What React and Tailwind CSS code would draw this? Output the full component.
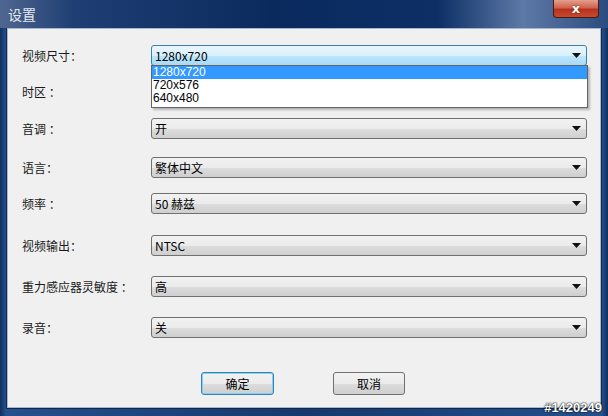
import React from 'react';

const latin = "font-['Liberation_Sans','Noto_Sans_CJK_SC',sans-serif]";
const cjk = "font-['Noto_Sans_CJK_SC','Liberation_Sans',sans-serif]";

const Arrow = () => (
    <svg width="9" height="5" viewBox="0 0 9 5" className="mr-[5px]">
        <path d="M0 0 H9 L4.5 5 Z" fill="#111" />
    </svg>
);

const Combo = ({ value, active }) => (
    <div
        className={
            active
                ? 'flex h-[21px] flex-1 items-center justify-between rounded-[3px] border border-[#3c7fb1] bg-[linear-gradient(#eaf6fd_0%,#d9f0fc_50%,#bee6fd_51%,#a7d9f5_100%)] pl-[3px]'
                : 'flex h-[21px] flex-1 items-center justify-between rounded-[3px] border border-[#707070] bg-[linear-gradient(#f2f2f2_0%,#ebebeb_50%,#dddddd_51%,#cfcfcf_100%)] pl-[3px]'
        }
    >
        <span className={`text-[12px] leading-none text-black ${cjk}`}>{value}</span>
        <Arrow />
    </div>
);

const rows = [
    { label: '视频尺寸：', value: '1280x720', mt: 'mt-[16px]', active: true },
    { label: '时区 ：', value: '', mt: 'mt-[15px]' },
    { label: '音调 ：', value: '开', mt: 'mt-[16px]' },
    { label: '语言：', value: '繁体中文', mt: 'mt-[18px]' },
    { label: '频率 ：', value: '50 赫兹', mt: 'mt-[15px]' },
    { label: '视频输出：', value: 'NTSC', mt: 'mt-[21px]' },
    { label: '重力感应器灵敏度 ：', value: '高', mt: 'mt-[20px]' },
    { label: '录音：', value: '关', mt: 'mt-[20px]' },
];

const options = ['1280x720', '720x576', '640x480'];

export default function App() {
    return (
        <div className="relative flex h-[416px] w-[608px] flex-col overflow-hidden bg-[linear-gradient(90deg,#10305f_0%,#24508c_1%,#16386c_50%,#24508c_99%,#10305f_100%)]">
            {/* Title bar */}
            <div className="relative flex h-[28px] items-center bg-[linear-gradient(90deg,#4f6690_0%,#1f3f74_12%,#0a2a5e_45%,#0d2f66_72%,#5d79a6_86%,#2b4b80_100%)] pl-[8px]">
                <span className={`text-[14px] text-[#e6e9ee] ${cjk}`}>设置</span>
                <div className="absolute right-[9px] top-0 flex h-[18px] w-[46px] items-center justify-center rounded-b-[4px] border border-t-0 border-[#4a1a12] bg-[linear-gradient(#e3a08f_0%,#d0634e_45%,#b8321e_55%,#c44a2e_100%)]">
                    <span className="text-[13px] font-bold leading-none text-white [text-shadow:0_0_2px_#5a1a10] font-['DejaVu_Sans',sans-serif]">x</span>
                </div>
            </div>

            {/* Client area */}
            <div className="mx-[7px] mb-[8px] flex flex-1 border border-[#a9b8cc] bg-[#f0f0f0] shadow-[0_0_0_1px_#0f2850]">
                <div className="relative flex flex-1 flex-col pl-[14px] pr-[13px]">
                    {rows.map((r) => (
                        <div key={r.label} className={`flex items-center ${r.mt}`}>
                            <span className={`w-[129px] text-[12px] text-[#1a1a1a] ${cjk}`}>{r.label}</span>
                            <Combo value={r.value} active={r.active} />
                        </div>
                    ))}

                    {/* Open dropdown list */}
                    <div className={`absolute left-[143px] right-[12px] top-[36px] border border-[#646464] bg-white pb-[2px] shadow-[2px_2px_2px_rgba(0,0,0,0.25)] ${latin}`}>
                        {options.map((o, i) => (
                            <div
                                key={o}
                                className={
                                    i === 0
                                        ? 'h-[13px] bg-[#3399ff] pl-[1px] text-[12px] leading-[13px] text-white'
                                        : 'h-[13px] pl-[1px] text-[12px] leading-[13px] text-black'
                                }
                            >
                                {o}
                            </div>
                        ))}
                    </div>

                    {/* Buttons */}
                    <div className="mt-[34px] flex pl-[179px]">
                        <button className={`h-[23px] w-[73px] rounded-[3px] border border-[#3c7fb1] bg-[linear-gradient(#f2f2f2_0%,#ebebeb_50%,#dddddd_51%,#cfcfcf_100%)] text-[12px] text-black shadow-[inset_0_0_0_1px_#7ed3f7] ${cjk}`}>
                            确定
                        </button>
                        <button className={`ml-[59px] h-[23px] w-[72px] rounded-[3px] border border-[#707070] bg-[linear-gradient(#f2f2f2_0%,#ebebeb_50%,#dddddd_51%,#cfcfcf_100%)] text-[12px] text-black ${cjk}`}>
                            取消
                        </button>
                    </div>
                </div>
            </div>

            {/* Watermark */}
            <span className="absolute bottom-[2px] right-[6px] text-[13px] font-bold leading-none text-white [text-shadow:0_0_2px_#000,0_0_1px_#000] font-['Liberation_Sans',sans-serif]">
                #1420249
            </span>
        </div>
    );
}
